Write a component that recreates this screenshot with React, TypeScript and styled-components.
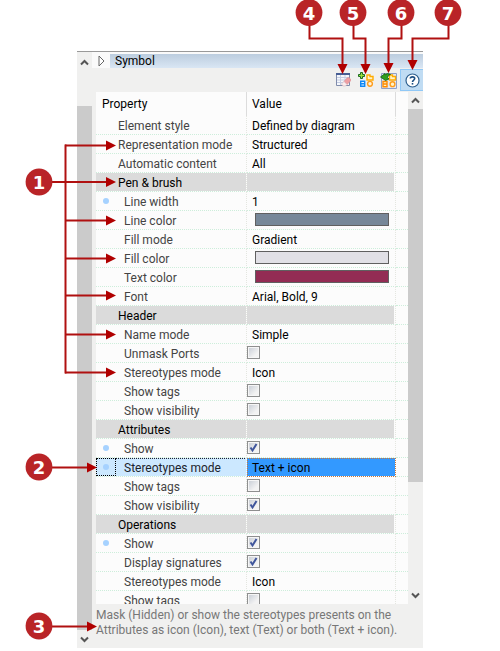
import React from "react";
import styled, { createGlobalStyle, css } from "styled-components";

const Global = createGlobalStyle`
  *, *::before, *::after { box-sizing: border-box; }
  body { margin: 0; background: #fff; font-family: Roboto, "Open Sans", sans-serif; font-size: 12px; color: #000; }
  button { font: inherit; color: inherit; padding: 0; margin: 0; border: 0; background: none; }
`;

const Page = styled.main`
  position: relative;
  display: flex;
  height: 100vh;
  min-height: 400px;
  padding: 51px 77px 3px;
  overflow: hidden;
`;

const Panel = styled.section`
  flex: 1;
  min-width: 0;
  display: flex;
  border-top: 1px solid #999;
  background: #f0f0ef;
`;

const ScrollTrack = styled.div`
  flex: none;
  width: 15px;
  display: flex;
  flex-direction: column;
`;

const ScrollButton = styled.button<{ $size: number }>`
  flex: none;
  height: ${(p) => p.$size}px;
  display: flex;
  align-items: center;
  justify-content: center;
`;

const Thumb = styled.div<{ $grow: number }>`
  flex: ${(p) => p.$grow} 0 0;
  background: #cbcbcb;
`;

const Space = styled.div<{ $grow: number }>`
  flex: ${(p) => p.$grow} 0 0;
`;

const Content = styled.div`
  flex: 1;
  min-width: 0;
  display: flex;
  flex-direction: column;
`;

const TitleRow = styled.header`
  flex: none;
  display: flex;
  height: 16px;
  padding-top: 2px;
  background: #fafafa;
`;

const Expander = styled.button`
  width: 18px;
  display: flex;
  align-items: center;
  justify-content: center;
`;

const Title = styled.h1`
  flex: 1;
  margin: 0;
  padding-left: 5px;
  font-size: 12px;
  font-weight: 400;
  line-height: 15px;
  background: linear-gradient(#bccddf, #d9e6f4);
`;

const Toolbar = styled.div`
  flex: none;
  display: flex;
  justify-content: flex-end;
  align-items: center;
  height: 24px;
`;

const ToolButton = styled.button<{ $active?: boolean }>`
  width: 23px;
  height: 22px;
  display: flex;
  align-items: center;
  justify-content: center;
  ${(p) =>
    p.$active &&
    css`
      background: #c0dcf3;
      border: 1px solid #90c8f6;
      border-right: 0;
    `}
`;

const Body = styled.div`
  flex: 1;
  min-height: 0;
  display: flex;
  padding-left: 4px;
`;

const Viewport = styled.div`
  flex: 1;
  min-width: 0;
  overflow: hidden;
  background: #fcfcfc;
`;

const Table = styled.table`
  width: 100%;
  table-layout: fixed;
  border-collapse: separate;
  border-spacing: 0;
`;

const NameCol = styled.col`
  width: 151px;
`;

const EndCol = styled.col`
  width: 12px;
`;

const HeadCell = styled.th`
  height: 24px;
  padding: 0 0 0 6px;
  border-right: 1px solid #dcdcdc;
  text-align: left;
  font-weight: 400;
  line-height: 16px;
  & + & {
    padding-left: 5px;
  }
  &:last-child {
    border-right: 0;
  }
`;

const Row = styled.tr`
  height: 19px;
`;

const cell = css`
  height: 19px;
  padding: 0;
  border-bottom: 1px dotted #cdeedb;
  line-height: 18px;
  vertical-align: top;
  white-space: nowrap;
`;

type Kind = "group" | "top" | "item";

const NameCell = styled.th<{ $kind: Kind; $selected?: boolean }>`
  ${cell}
  border-right: 1px dotted #e4e6e0;
  text-align: left;
  font-weight: 400;
  color: ${(p) => (p.$kind === "group" ? "#000" : p.$selected ? "#1c242c" : "#444")};
  background: ${(p) => (p.$kind === "group" ? "#dbdbdb" : p.$selected ? "#cce8ff" : "transparent")};
  background-clip: padding-box;
  ${(p) => p.$selected && "border-right-color: #cce8ff;"}
`;

const NameBox = styled.div<{ $kind: Kind; $selected?: boolean }>`
  display: grid;
  grid-template-columns: ${(p) => (p.$kind === "item" ? 28 : 22)}px 1fr;
  height: 18px;
  ${(p) =>
    p.$selected &&
    css`
      background: repeating-linear-gradient(90deg, #223 0 1px, transparent 1px 2px) 20px 0 / 100% 1px no-repeat;
    `}
`;

const Marker = styled.span<{ $selected?: boolean }>`
  width: 20px;
  height: 18px;
  display: flex;
  align-items: center;
  justify-content: center;
  ${(p) => p.$selected && "border: 1px dotted #000;"}
`;

const Dot = styled.span`
  width: 6px;
  height: 6px;
  border-radius: 50%;
  background: #a6d2ff;
`;

const ValueCell = styled.td<{ $selected?: boolean }>`
  ${cell}
  border-right: 1px dotted #e4e6e0;
  background-clip: padding-box;
  ${(p) =>
    p.$selected &&
    css`
      background-color: #3399ff;
      outline: 1px dotted #c8783c;
      outline-offset: -1px;
    `}
`;

const EndCell = styled.td`
  ${cell}
`;

const GroupFill = styled.div`
  height: 18px;
  margin-right: 1px;
  background: #dbdbdb;
`;

const NameText = styled.span`
  padding-top: 1px;
`;

const ValueText = styled.div`
  height: 18px;
  padding: 1px 0 0 5px;
`;

const Swatch = styled.button<{ $color: string }>`
  display: block;
  width: calc(100% - 14px);
  height: 13px;
  margin: 2px 0 0 8px;
  border: 1px solid #606060;
  background: ${(p) => p.$color};
`;

const CheckBox = styled.span`
  display: grid;
  width: 13px;
  height: 13px;
  margin-top: 2px;
  > * {
    grid-area: 1 / 1;
  }
  > svg {
    pointer-events: none;
  }
`;

const CheckInput = styled.input`
  appearance: none;
  width: 13px;
  height: 13px;
  margin: 0;
  padding: 1px;
  border: 1px solid #8e8f8f;
  background:
    linear-gradient(135deg, #cbd0d8, #f3f3f3 75%) content-box,
    #f6f6f6;
`;

const Description = styled.p`
  flex: none;
  height: 44px;
  margin: 0;
  padding: 4px 0 0 4px;
  line-height: 15px;
  color: #777;
  white-space: nowrap;
`;

const Overlay = styled.svg<{ $side: "left" | "right" }>`
  position: absolute;
  top: 0;
  ${(p) => p.$side}: 0;
  pointer-events: none;
`;

const Digit = styled.text`
  font: bold 18px "DejaVu Sans", sans-serif;
  fill: #fff;
  text-anchor: middle;
`;

const Chevron = ({ down }: { down?: boolean }) => (
  <svg width="9" height="7" viewBox="0 0 9 7" aria-hidden="true">
    <path d={down ? "M1 1.5 4.5 5 8 1.5" : "M1 5.5 4.5 2 8 5.5"} fill="none" stroke="#555" strokeWidth="2" />
  </svg>
);

const ResetIcon = () => (
  <svg width="16" height="16" viewBox="0 0 16 16" aria-hidden="true">
    <path d="M1.500 1.500h13v12h-13z" fill="#f4f6fb" stroke="#7f8bab" />
    <path d="M1 1h14v2H1z" fill="#465d94" />
    <path d="M2 5.500h12M2 8h12M2 10.500h12M5.500 3v10M10 3v10" stroke="#c3cce2" fill="none" />
    <path d="M9 9.500 12 6q1.500-1 3 .5t0 3L12 12.500z" fill="#ee9ea2" stroke="#dc8c92" strokeWidth=".6" />
    <path d="M9 9.500 12 12.500 10.500 14H8L6.500 12z" fill="#fbeeee" stroke="#d9b4b8" strokeWidth=".6" />
  </svg>
);

const AddIcon = () => (
  <svg width="16" height="16" viewBox="0 0 16 16" aria-hidden="true">
    <g fill="none" strokeWidth="1.400">
      <path d="M9 3h3v1.500h3V8H9z" stroke="#ffab00" fill="#fff3c8" />
      <path d="M2.700 9.200h4V14.300h-4zM2.700 11.700h4" stroke="#1188f4" fill="#e8f4ff" />
      <circle cx="12" cy="11.800" r="2.400" stroke="#ff9d1c" fill="#fff3dd" />
    </g>
    <path d="M2.500.5h2v2h2v2h-2v2h-2v-2h-2v-2h2z" fill="#9be03a" stroke="#1c6a22" />
  </svg>
);

const ApplyIcon = () => (
  <svg width="17" height="17" viewBox="0 0 17 17" aria-hidden="true">
    <path d="M1.500 1.500h15v15h-15z" fill="#e6e9f2" stroke="#8fa0c8" />
    <g fill="#fff3c8" strokeWidth="1.400">
      <path d="M9.500 3h3v1.500h3V8h-6z" stroke="#ffab00" />
      <path d="M3 9.500h4v5.300H3zM3 12h4" stroke="#ff8a00" />
      <circle cx="12.500" cy="12.200" r="2.400" stroke="#ff9d1c" />
    </g>
    <path d="M.5 5 5 1.500V3Q7 .5 10.500 2.500 8 3 7.500 5.500L9 7 5.500 8.500z" fill="#2f9e1d" stroke="#12600f" strokeWidth=".8" />
  </svg>
);

const HelpIcon = () => (
  <svg width="15" height="15" viewBox="0 0 15 15" aria-hidden="true">
    <circle cx="7.500" cy="7.500" r="6.500" fill="#fff" stroke="#2e5f8e" strokeWidth="1.200" />
    <path d="M5.300 5.600C5.300 3.300 9.700 3.300 9.700 5.600 9.700 7.200 7.500 7 7.500 9" fill="none" stroke="#1d4f83" strokeWidth="1.600" />
    <path d="M6.700 10h1.600v1.600H6.700z" fill="#1d4f83" />
  </svg>
);

type Value = string | boolean | { color: string } | null;
type Prop = { name: string; kind: Kind; value: Value; dot?: boolean; selected?: boolean };

const group = (name: string): Prop => ({ name, kind: "group", value: null });
const prop = (name: string, value: Value, extra: Partial<Prop> = {}): Prop => ({ name, kind: "item", value, ...extra });

const rows: Prop[] = [
  prop("Element style", "Defined by diagram", { kind: "top" }),
  prop("Representation mode", "Structured", { kind: "top" }),
  prop("Automatic content", "All", { kind: "top" }),
  group("Pen & brush"),
  prop("Line width", "1", { dot: true }),
  prop("Line color", { color: "#778899" }),
  prop("Fill mode", "Gradient"),
  prop("Fill color", { color: "#e1e0e6" }),
  prop("Text color", { color: "#932c54" }),
  prop("Font", "Arial, Bold, 9"),
  group("Header"),
  prop("Name mode", "Simple"),
  prop("Unmask Ports", false),
  prop("Stereotypes mode", "Icon"),
  prop("Show tags", false),
  prop("Show visibility", false),
  group("Attributes"),
  prop("Show", true, { dot: true }),
  prop("Stereotypes mode", "Text + icon", { dot: true, selected: true }),
  prop("Show tags", false),
  prop("Show visibility", true),
  group("Operations"),
  prop("Show", true, { dot: true }),
  prop("Display signatures", true),
  prop("Stereotypes mode", "Icon"),
  prop("Show tags", false),
];

const ValueView = ({ value, labelId }: { value: Value; labelId: string }) => {
  const [checked, setChecked] = React.useState(value === true);
  if (value === null) return <GroupFill />;
  if (typeof value === "string") return <ValueText>{value}</ValueText>;
  if (typeof value === "boolean")
    return (
      <CheckBox>
        <CheckInput type="checkbox" aria-labelledby={labelId} checked={checked} onChange={() => setChecked(!checked)} />
        {checked && (
          <svg width="13" height="13" viewBox="0 0 13 13" aria-hidden="true">
            <path d="M3.500 6.500 5.500 9.500 9.500 3" fill="none" stroke="#40569c" strokeWidth="2" />
          </svg>
        )}
      </CheckBox>
    );
  return <Swatch type="button" aria-labelledby={labelId} $color={value.color} />;
};

const Callout = ({ n, x, y }: { n: number; x: number; y: number }) => (
  <g>
    <circle cx={x} cy={y} r="13.400" fill="#b92427" />
    <Digit x={x} y={y + 7}>{n}</Digit>
  </g>
);

const leftArrows = [145, 220, 258, 295, 334, 372];

export default function App() {
  return (
    <>
      <Global />
      <Page>
        <Panel>
          <ScrollTrack>
            <ScrollButton type="button" aria-label="Scroll panel up" $size={21}><Chevron /></ScrollButton>
            <Space $grow={33} />
            <Thumb $grow={524} />
            <ScrollButton type="button" aria-label="Scroll panel down" $size={18}><Chevron down /></ScrollButton>
          </ScrollTrack>
          <Content>
            <TitleRow>
              <Expander type="button" aria-label="Expand section">
                <svg width="7" height="12" viewBox="0 0 7 12" aria-hidden="true">
                  <path d="M1 1v10l5-5z" fill="#fff" stroke="#666" />
                </svg>
              </Expander>
              <Title>Symbol</Title>
            </TitleRow>
            <Toolbar>
              <ToolButton type="button" aria-label="Reset"><ResetIcon /></ToolButton>
              <ToolButton type="button" aria-label="Add style"><AddIcon /></ToolButton>
              <ToolButton type="button" aria-label="Apply style"><ApplyIcon /></ToolButton>
              <ToolButton type="button" aria-label="Help" $active><HelpIcon /></ToolButton>
            </Toolbar>
            <Body>
              <Viewport>
                <Table>
                  <colgroup><NameCol /><col /><EndCol /></colgroup>
                  <thead>
                    <tr>
                      <HeadCell scope="col">Property</HeadCell>
                      <HeadCell scope="col">Value</HeadCell>
                      <HeadCell aria-hidden="true" />
                    </tr>
                  </thead>
                  <tbody>
                    {rows.map((r, i) => (
                      <Row key={i}>
                        <NameCell scope="row" $kind={r.kind} $selected={r.selected}>
                          <NameBox $kind={r.kind} $selected={r.selected}>
                            <Marker $selected={r.selected}>{r.dot && <Dot />}</Marker>
                            <NameText id={`prop-${i}`}>{r.name}</NameText>
                          </NameBox>
                        </NameCell>
                        <ValueCell $selected={r.selected}>
                          <ValueView value={r.value} labelId={`prop-${i}`} />
                        </ValueCell>
                        <EndCell />
                      </Row>
                    ))}
                  </tbody>
                </Table>
              </Viewport>
              <ScrollTrack>
                <ScrollButton type="button" aria-label="Scroll list up" $size={17}><Chevron /></ScrollButton>
                <Thumb $grow={373} />
                <Space $grow={105} />
                <ScrollButton type="button" aria-label="Scroll list down" $size={17}><Chevron down /></ScrollButton>
              </ScrollTrack>
            </Body>
            <Description>
              Mask (Hidden) or show the stereotypes presents on the
              <br />
              Attributes as icon (Icon), text (Text) or both (Text + icon).
            </Description>
          </Content>
        </Panel>
        <Overlay $side="left" width="130" height="651" viewBox="0 0 130 651">
          <g stroke="#b01010" strokeWidth="2" fill="none">
            <path d="M65.500 144.500V373.500" />
            {leftArrows.map((y) => <path key={y} d={`M65 ${y + 0.5}H107`} />)}
            <path d="M50 182H107M50 467.500H88M50 626.500H88" />
          </g>
          <g fill="#b00000">
            {[...leftArrows, 181.5].map((y) => <path key={y} d={`M106 ${y - 4.5}v10l10-5z`} />)}
            <path d="M87 462.500v10l10-5zM87 621.500v10l10-5z" />
          </g>
          <Callout n={1} x={39} y={182} />
          <Callout n={2} x={39} y={467} />
          <Callout n={3} x={39} y={626} />
        </Overlay>
        <Overlay $side="right" width="220" height="80" viewBox="280 0 220 80">
          <g stroke="#b01010" strokeWidth="2" fill="none">
            <path d="M309.500 24V38.500H342.500V65M353.500 24V38.500H365.500V65M401.500 24V38.500H388.500V64M448.500 24V38.500H412.500V61" />
          </g>
          <path d="M337.500 64h10l-5 10zM360.500 64h10l-5 10zM383.500 63h10l-5 10zM407.500 60h10l-5 10z" fill="#b00000" />
          <Callout n={4} x={309} y={12.5} />
          <Callout n={5} x={353} y={12.5} />
          <Callout n={6} x={401} y={12.5} />
          <Callout n={7} x={448} y={12.5} />
        </Overlay>
      </Page>
    </>
  );
}
